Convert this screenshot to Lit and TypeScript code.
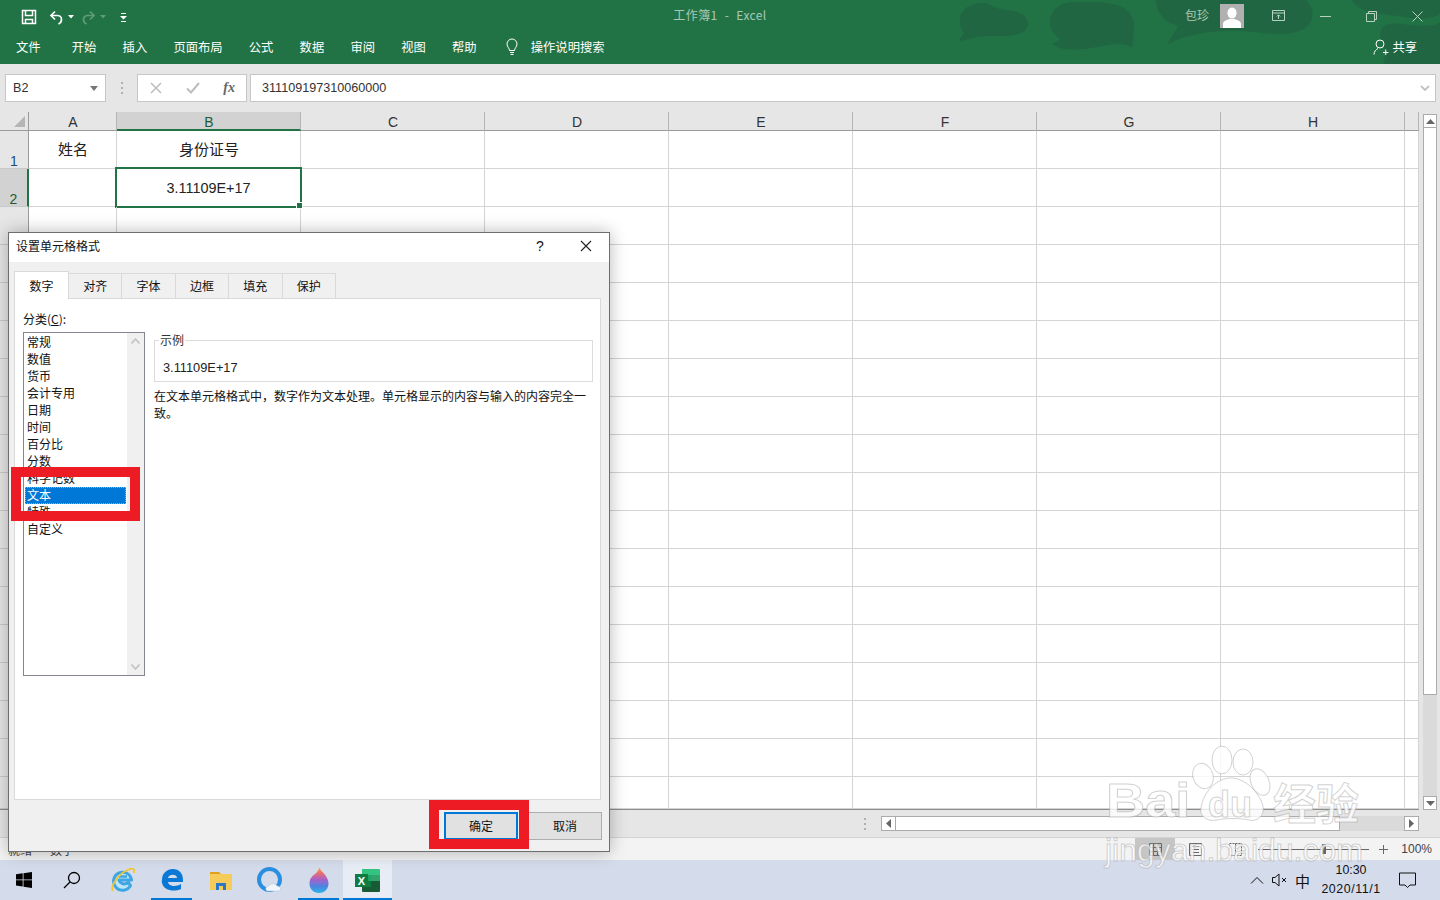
import { LitElement, html, css, nothing } from 'lit';
import { customElement } from 'lit/decorators.js';
import { classMap } from 'lit/directives/class-map.js';

const MENU = ['文件', '开始', '插入', '页面布局', '公式', '数据', '审阅', '视图', '帮助'];
const COLS = ['A', 'B', 'C', 'D', 'E', 'F', 'G', 'H', ''];
const CATEGORIES = ['常规', '数值', '货币', '会计专用', '日期', '时间', '百分比', '分数', '科学记数', '文本', '特殊', '自定义'];
const TABS = ['数字', '对齐', '字体', '边框', '填充', '保护'];
const ROW_COUNT = 18;

@customElement('excel-dialog')
export class ExcelDialog extends LitElement {
  static styles = css`
    :host {
      position: absolute;
      left: 8px;
      top: 232px;
      width: 602px;
      height: 620px;
      box-sizing: border-box;
      display: flex;
      flex-direction: column;
      background: #f0f0f0;
      border: 1px solid #6e6e6e;
      box-shadow: 0 0 16px rgba(0, 0, 0, 0.28);
      font-family: 'Noto Sans CJK SC', 'Liberation Sans', sans-serif;
      font-size: 12px;
      color: #111;
    }
    .title {
      height: 29px;
      box-sizing: border-box;
      padding: 0 0 4px 7px;
      flex: none;
      background: #fff;
      display: flex;
      align-items: center;
    }
    .title .name { flex: 1; }
    .help { width: 20px; text-align: center; font: 14px 'Liberation Sans', sans-serif; margin-right: 30px; }
    .close { width: 12px; height: 12px; margin-right: 17px; }
    .tabs {
      display: flex;
      align-items: flex-end;
      height: 36px;
      padding: 0 0 0 5px;
      flex: none;
    }
    .tab {
      height: 25px;
      box-sizing: border-box;
      width: 53.4px;
      padding-bottom: 1px;
      border: 1px solid #d9d9d9;
      border-left: none;
      border-bottom: none;
      display: flex;
      align-items: center;
      justify-content: center;
    }
    .tab.on {
      width: 55px;
      height: 28px;
      margin-bottom: -1px;
      background: #fff;
      border-left: 1px solid #d9d9d9;
      position: relative;
    }
    .panel {
      margin: 0 8px 0 5px;
      height: 502px;
      flex: none;
      box-sizing: border-box;
      background: #fff;
      border: 1px solid #d9d9d9;
      padding: 12px 7px 0 8px;
    }
    .label { line-height: 15px; margin-bottom: 6px; }
    .cols { display: flex; gap: 9px; }
    .list {
      width: 122px;
      height: 344px;
      box-sizing: border-box;
      border: 1px solid #828790;
      position: relative;
      padding-top: 1px;
      flex: none;
    }
    .item {
      width: 101px;
      height: 17px;
      box-sizing: border-box;
      margin-left: 1px;
      padding-left: 2px;
      line-height: 15px;
    }
    .item.on {
      background: #0078d7;
      color: #fff;
      outline: 1px dotted #e8a04a;
      outline-offset: -1px;
    }
    .bar {
      position: absolute;
      right: 0;
      top: 0;
      bottom: 0;
      width: 17px;
      background: #f0f0f0;
      display: flex;
      flex-direction: column;
      justify-content: space-between;
      align-items: center;
      padding: 5px 0;
      box-sizing: border-box;
    }
    .bar svg { width: 9px; height: 6px; }
    .right { flex: 1; padding-top: 8px; }
    .group {
      position: relative;
      height: 42px;
      box-sizing: border-box;
      border: 1px solid #dcdcdc;
      padding: 18px 0 0 8px;
      line-height: 17px;
      font-family: 'Liberation Sans', sans-serif;
      font-size: 12.8px;
      color: #222;
    }
    .legend {
      position: absolute;
      left: 4px;
      top: -10px;
      padding: 0 1px;
      background: #fff;
      font-family: 'Noto Sans CJK SC', sans-serif;
      font-size: 12px;
      color: #333;
    }
    .desc { margin-top: 5px; line-height: 17px; }
    .foot {
      display: flex;
      justify-content: flex-end;
      gap: 10px;
      padding: 12px 7px 0 0;
    }
    .btn {
      width: 74px;
      height: 28px;
      box-sizing: border-box;
      padding-bottom: 2px;
      background: #e1e1e1;
      border: 1px solid #adadad;
      display: flex;
      align-items: center;
      justify-content: center;
    }
    .btn.def { border: 2px solid #0078d7; }
  `;

  render() {
    return html`
      <div class="title">
        <span class="name">设置单元格格式</span>
        <span class="help">?</span>
        <svg class="close" viewBox="0 0 12 12"><path d="M1 1l10 10M11 1L1 11" stroke="#222" stroke-width="1.1" fill="none"/></svg>
      </div>
      <div class="tabs">
        ${TABS.map((t, i) => html`<div class=${classMap({ tab: true, on: i === 0 })}>${t}</div>`)}
      </div>
      <div class="panel">
        <div class="label">分类(<u>C</u>):</div>
        <div class="cols">
          <div class="list">
            ${CATEGORIES.map((c) => html`<div class=${classMap({ item: true, on: c === '文本' })}>${c}</div>`)}
            <div class="bar">
              <svg viewBox="0 0 9 6"><path d="M0.5 5.5L4.5 1l4 4.5" fill="none" stroke="#c4c4c4" stroke-width="1.6"/></svg>
              <svg viewBox="0 0 9 6"><path d="M0.5 0.5L4.5 5l4-4.5" fill="none" stroke="#c4c4c4" stroke-width="1.6"/></svg>
            </div>
          </div>
          <div class="right">
            <div class="group">
              <span class="legend">示例</span>
              3.11109E+17
            </div>
            <div class="desc">在文本单元格格式中，数字作为文本处理。单元格显示的内容与输入的内容完全一致。</div>
          </div>
        </div>
      </div>
      <div class="foot">
        <div class="btn def">确定</div>
        <div class="btn">取消</div>
      </div>
    `;
  }
}

@customElement('app-root')
export class AppRoot extends LitElement {
  static styles = css`
    :host {
      display: block;
      position: relative;
      width: 1440px;
      height: 900px;
      overflow: hidden;
      background: #e6e6e6;
      font-family: 'Noto Sans CJK SC', 'Liberation Sans', sans-serif;
    }
    .ribbon {
      position: relative;
      height: 64px;
      background: #217346;
      color: #fff;
      font-size: 12.3px;
    }
    .art { position: absolute; left: 0; top: 0; width: 1440px; height: 64px; }
    .titlebar {
      position: relative;
      height: 32px;
      display: grid;
      grid-template-columns: 1fr auto 1fr;
      align-items: center;
    }
    .qat { display: flex; align-items: center; padding-left: 21px; }
    .qat svg { display: block; }
    .doc { color: #a9c9b6; font-size: 12px; letter-spacing: 0.4px; word-spacing: 4px; padding-bottom: 5px; }
    .win { display: flex; align-items: center; justify-content: flex-end; margin-bottom: 2px; }
    .user { color: #a9c9b6; font-size: 12px; margin-right: 11px; padding-bottom: 4px; }
    .avatar { width: 24px; height: 24px; margin-right: 12px; background: #b1b1b1; }
    .wbtn { width: 46px; height: 32px; display: flex; align-items: center; justify-content: center; }
    .menubar {
      position: relative;
      height: 32px;
      box-sizing: border-box;
      padding: 0 23px 2px 16px;
      display: flex;
      align-items: center;
      gap: 26.2px;
    }
    .menubar .first { margin-right: 5px; }
    .tell { display: flex; align-items: center; gap: 11px; margin-left: 1px; }
    .share { margin-left: auto; display: flex; align-items: center; gap: 3px; }

    .formula {
      height: 48px;
      box-sizing: border-box;
      padding: 10px 4px 0 5px;
      display: flex;
      align-items: flex-start;
      background: #e6e6e6;
      font-family: 'Liberation Sans', sans-serif;
      color: #333;
    }
    .box {
      height: 28px;
      box-sizing: border-box;
      background: #fff;
      border: 1px solid #c6c6c6;
      display: flex;
      align-items: center;
    }
    .namebox { width: 101px; padding: 0 7px 0 7px; font-size: 12.6px; justify-content: space-between; }
    .dots { width: 31px; height: 28px; display: flex; align-items: center; justify-content: center; flex: none; }
    .fxbox { width: 110px; margin-right: 3px; justify-content: space-between; padding: 0 11px 0 12px; flex: none; }
    .fx { font: italic 700 14px 'Liberation Serif', serif; color: #666; }
    .input { flex: 1; padding: 0 5px 0 11px; font-size: 12.6px; justify-content: space-between; }

    .sheet { height: 698px; display: flex; background: #fff; }
    .grid {
      width: 1419px;
      height: 698px;
      box-sizing: border-box;
      display: grid;
      grid-template-columns: 29px 88px repeat(7, 184px) 14px;
      grid-template-rows: 19px repeat(17, 38px) 1fr;
      border-bottom: 1px solid #8d8d8d;
      overflow: hidden;
    }
    .cell {
      box-sizing: border-box;
      border-right: 1px solid #d4d4d4;
      border-bottom: 1px solid #d4d4d4;
      display: flex;
      align-items: center;
      justify-content: center;
      font-size: 15px;
      color: #222;
      position: relative;
    }
    .cell.cjk { padding: 0 0 2px 1px; }
    .num { font-family: 'Liberation Sans', sans-serif; font-size: 14.4px; }
    .sel::after {
      content: '';
      position: absolute;
      left: -2px;
      top: -2px;
      right: -2px;
      bottom: -2px;
      border: 2px solid #217346;
    }
    .handle {
      position: absolute;
      right: -3px;
      bottom: -3px;
      width: 5px;
      height: 5px;
      background: #217346;
      border: 1px solid #fff;
      z-index: 1;
    }
    .hd {
      box-sizing: border-box;
      background: #e6e6e6;
      border-right: 1px solid #b4b4b4;
      border-bottom: 1px solid #9b9b9b;
      font: 14px/19px 'Liberation Sans', sans-serif;
      color: #333;
      text-align: center;
      padding: 1px 0 0 1px;
    }
    .hd.on {
      background: #d2d2d2;
      border-bottom: 2px solid #217346;
      color: #1e5a39;
    }
    .corner { position: relative; border-right: 1px solid #9b9b9b; }
    .corner svg { position: absolute; right: 2px; bottom: 2px; }
    .rh {
      box-sizing: border-box;
      background: #e6e6e6;
      border-right: 1px solid #9b9b9b;
      border-bottom: 1px solid #c8c8c8;
      font: 14px/14px 'Liberation Sans', sans-serif;
      color: #1d4e7a;
      text-align: center;
      display: flex;
      align-items: flex-end;
      justify-content: center;
    }
    .rh.on { background: #d2d2d2; border-right: 2px solid #217346; color: #1e5a39; }
    .vbar {
      flex: 1;
      background: #e6e6e6;
      box-sizing: border-box;
      padding: 2px 3px 0 4px;
      display: flex;
      flex-direction: column;
    }
    .arrow {
      flex: none;
      box-sizing: border-box;
      background: #fff;
      border: 1px solid #ababab;
      display: flex;
      align-items: center;
      justify-content: center;
      height: 14px;
    }
    .vthumb { flex: 0 0 567px; background: #fff; border: 1px solid #ababab; border-top: none; box-sizing: border-box; }
    .vtrack { flex: 1; background: #dadada; }

    .tabsrow {
      height: 28px;
      box-sizing: border-box;
      background: #e6e6e6;
      border-bottom: 1px solid #d4d4d4;
      display: flex;
      align-items: center;
      padding: 0 21px 0 862px;
    }
    .grip { width: 6px; margin-right: 13px; display: flex; justify-content: center; }
    .hbar { flex: 1; height: 15px; display: flex; }
    .hbar .arrow { width: 15px; height: 15px; }
    .hthumb { width: 444px; background: #fff; border: 1px solid #ababab; border-left: none; box-sizing: border-box; }
    .htrack { flex: 1; background: #dadada; }

    .status {
      height: 22px;
      background: #f3f3f3;
      display: flex;
      align-items: center;
      font-size: 12px;
      color: #444;
    }
    .st { width: 34px; margin-left: 8px; }
    .views { margin-left: auto; display: flex; height: 22px; }
    .view { width: 40px; display: flex; align-items: center; justify-content: center; }
    .view.on { background: #c6c6c6; }
    .zoom { display: flex; align-items: center; width: 185px; font: 12px 'Liberation Sans', sans-serif; color: #444; }
    .zoom .pct { margin-left: auto; margin-right: 8px; }

    .taskbar { height: 40px; background: #d4dbea; display: flex; align-items: stretch; }
    .start { width: 48px; display: flex; align-items: center; justify-content: center; flex: none; }
    .apps { display: flex; margin-left: 2px; }
    .app { position: relative; width: 49px; display: flex; align-items: center; justify-content: center; }
    .app.open::after {
      content: '';
      position: absolute;
      left: 4px;
      right: 4px;
      bottom: 0;
      height: 2px;
      background: #0078d7;
    }
    .app.active { background: #e8edf5; }
    .app.active::after { left: 0; right: 0; }
    .tray { margin-left: auto; display: flex; align-items: center; padding-right: 14px; color: #111; }
    .ti { width: 23px; display: flex; align-items: center; justify-content: center; font-size: 15px; }
    .clock {
      width: 74px;
      text-align: center;
      font: 12.4px/19px 'Liberation Sans', sans-serif;
    }
    .date { letter-spacing: 0.55px; }
    .notif { width: 38px; display: flex; justify-content: center; }

    .redbox {
      position: absolute;
      box-sizing: border-box;
      border: 10px solid #ed1c24;
    }
    .rb1 { left: 11px; top: 467px; width: 129px; height: 54px; }
    .rb2 { left: 429px; top: 800px; width: 100px; height: 49px; }

    .mark {
      position: absolute;
      left: 1100px;
      top: 740px;
      width: 270px;
      height: 130px;
      pointer-events: none;
      color: rgba(255, 255, 255, 0.8);
      -webkit-text-stroke: 1px rgba(165, 165, 165, 0.5);
      font-family: 'Liberation Sans', sans-serif;
    }
    .mark svg { position: absolute; left: 85px; top: 2px; }
    .bai {
      position: absolute;
      left: 6px;
      top: 37px;
      font-size: 48px;
      line-height: 48px;
      font-weight: 700;
      transform: scaleX(1.13);
      transform-origin: left top;
    }
    .du { position: absolute; left: 108px; top: 47px; font-size: 36px; line-height: 36px; font-weight: 700; }
    .jy { position: absolute; left: 173px; top: 38px; font: 700 43px/46px 'Noto Sans CJK SC', sans-serif; }
    .url { position: absolute; left: 5px; top: 98px; font-size: 32px; line-height: 24px; }
  `;

  private rowCell(row: number, col: string) {
    if (row === 1 && col === 'A') return html`<div class="cell cjk">姓名</div>`;
    if (row === 1 && col === 'B') return html`<div class="cell cjk">身份证号</div>`;
    if (row === 2 && col === 'B') {
      return html`<div class="cell num sel">3.11109E+17<span class="handle"></span></div>`;
    }
    return html`<div class="cell"></div>`;
  }

  private renderGrid() {
    const rows = Array.from({ length: ROW_COUNT }, (_, i) => i + 1);
    return html`
      <div class="grid">
        <div class="hd corner">
          <svg width="13" height="13" viewBox="0 0 13 13"><path d="M12 1v11H1z" fill="#b5b5b5"/></svg>
        </div>
        ${COLS.map((c) => html`<div class=${classMap({ hd: true, on: c === 'B' })}>${c}</div>`)}
        ${rows.map(
          (r) => html`
            <div class=${classMap({ rh: true, on: r === 2 })}>${r < 4 ? r : nothing}</div>
            ${COLS.map((c) => this.rowCell(r, c))}
          `,
        )}
      </div>
    `;
  }

  render() {
    return html`
      <div class="ribbon">
        <svg class="art" viewBox="0 0 1440 64" fill="#206642">
          <path d="M960 22c-2-12 12-20 24-19 8 1 10 6 22 7 14 1 22 6 22 14 0 8-10 12-24 12-16 0-26 0-30 2l-14 3c-2 0 2-6 4-8-2-3-4-7-4-11z"/>
          <path d="M1050 22c0-10 8-20 24-20 26 0 60-2 60 24 0 12-2 20-2 22-6-6-20-4-34-1-14 2-34 6-46-3 4-1 6-3 8-5-6-5-10-10-10-17z"/>
          <path d="M1156 0h150c10 10 10 26-10 32-4 1-10 2-14 2-10 0-22-1-28-2-26-2-60-2-86 12 2-6 8-14 10-18-14-4-22-14-22-26z"/>
          <path d="M1380 36c0-12 10-14 22-12 16 2 38 4 38-4v44h-56c-2-6 4-10 2-14-4-4-6-8-6-14z"/>
          <path d="M1352 0h88v14c-12 8-30 4-42 2-20-2-40-4-46-16z"/>
        </svg>
        <div class="titlebar">
          <div class="qat">
            <svg width="16" height="16" viewBox="0 0 16 16" fill="none" stroke="#fff" stroke-width="1.5">
              <path d="M1.500 1.500h13v13h-13z"/><path d="M4.500 1.500v5h7v-5M4.500 14.500v-4h7v4"/>
            </svg>
            <svg style="margin-left:12px" width="15" height="15" viewBox="0 0 15 15" fill="none" stroke="#fff" stroke-width="1.7">
              <path d="M6 1.500L2 5.500l4 4"/><path d="M2.500 5.500h6a4 4 0 0 1 4 4c0 2-1 3.600-3 4.600"/>
            </svg>
            <svg style="margin-left:4px" width="6" height="4" viewBox="0 0 6 4"><path d="M0 0h6L3 3.500z" fill="#fff"/></svg>
            <svg style="margin-left:7px" width="15" height="15" viewBox="0 0 15 15" fill="none" stroke="#5f9c7a" stroke-width="1.7">
              <path d="M9 1.500l4 4-4 4"/><path d="M12.500 5.500h-6a4 4 0 0 0-4 4c0 2 1 3.600 3 4.600"/>
            </svg>
            <svg style="margin-left:4px" width="6" height="4" viewBox="0 0 6 4"><path d="M0 0h6L3 3.500z" fill="#5f9c7a"/></svg>
            <svg style="margin-left:14px" width="7" height="9" viewBox="0 0 7 9" fill="#fff"><path d="M1 0h5v1H1zM0 3h7L3.500 6.500zM1 8h5v1H1z"/></svg>
          </div>
          <div class="doc">工作簿1 - Excel</div>
          <div class="win">
            <span class="user">包珍</span>
            <svg class="avatar" viewBox="0 0 24 24">
              <ellipse cx="12" cy="9" rx="4.600" ry="5.500" fill="#fff"/>
              <path d="M3 24v-4c0-3 4-4 6.500-5h5c2.500 1 6.500 2 6.500 5v4z" fill="#fff"/>
            </svg>
            <div class="wbtn">
              <svg width="14" height="12" viewBox="0 0 14 12" fill="none" stroke="#b7d2c2"><path d="M.5.500h12v10H.5zM.5 3h12"/><path d="M6.500 9V5M4.800 6.500l1.700-1.700 1.700 1.700"/></svg>
            </div>
            <div class="wbtn"><svg width="11" height="1" viewBox="0 0 11 1"><path d="M0 .5h11" stroke="#b7d2c2"/></svg></div>
            <div class="wbtn">
              <svg width="11" height="11" viewBox="0 0 11 11" fill="none" stroke="#b7d2c2"><path d="M.5 2.500h8v8h-8zM2.500 2.500v-2h8v8h-2"/></svg>
            </div>
            <div class="wbtn">
              <svg width="11" height="11" viewBox="0 0 11 11" fill="none" stroke="#b7d2c2"><path d="M.5.500l10 10M10.500.5l-10 10"/></svg>
            </div>
          </div>
        </div>
        <div class="menubar">
          ${MENU.map((m, i) => html`<span class=${i === 0 ? 'first' : ''}>${m}</span>`)}
          <span class="tell">
            <svg width="16" height="18" viewBox="0 0 16 18" fill="none" stroke="#fff">
              <path d="M5.500 12.500c0-2.500-2.500-3.500-2.500-6.500a5 5 0 0 1 10 0c0 3-2.500 4-2.500 6.500z"/><path d="M6 14.500h4M6.500 16.500h3"/>
            </svg>
            操作说明搜索
          </span>
          <span class="share">
            <svg width="16" height="16" viewBox="0 0 16 16" fill="none" stroke="#fff">
              <circle cx="7" cy="5" r="4"/><path d="M1 15.500c0-3 2-5 4-6M10 13.500h5.500M12.750 10.500v6"/>
            </svg>
            共享
          </span>
        </div>
      </div>

      <div class="formula">
        <div class="box namebox">
          B2
          <svg width="8" height="5" viewBox="0 0 8 5"><path d="M0 0h8L4 5z" fill="#777"/></svg>
        </div>
        <div class="dots">
          <svg width="2" height="12" viewBox="0 0 2 12" fill="#b0b0b0"><path d="M0 0h2v2H0zM0 5h2v2H0zM0 10h2v2H0z"/></svg>
        </div>
        <div class="box fxbox">
          <svg width="12" height="12" viewBox="0 0 12 12" fill="none" stroke="#bdbdbd" stroke-width="1.500"><path d="M1 1l10 10M11 1L1 11"/></svg>
          <svg width="14" height="12" viewBox="0 0 14 12" fill="none" stroke="#bdbdbd" stroke-width="2"><path d="M1 6.500l4 4L13 1"/></svg>
          <span class="fx">fx</span>
        </div>
        <div class="box input">
          311109197310060000
          <svg width="10" height="6" viewBox="0 0 10 6" fill="none" stroke="#c2c2c2" stroke-width="1.800"><path d="M1 1l4 4 4-4"/></svg>
        </div>
      </div>

      <div class="sheet">
        ${this.renderGrid()}
        <div class="vbar">
          <div class="arrow"><svg width="9" height="5" viewBox="0 0 9 5"><path d="M0 5L4.500 0 9 5z" fill="#666"/></svg></div>
          <div class="vthumb"></div>
          <div class="vtrack"></div>
          <div class="arrow"><svg width="9" height="5" viewBox="0 0 9 5"><path d="M0 0l4.500 5L9 0z" fill="#666"/></svg></div>
        </div>
      </div>

      <div class="tabsrow">
        <div class="grip"><svg width="2" height="12" viewBox="0 0 2 12" fill="#b0b0b0"><path d="M0 0h2v2H0zM0 5h2v2H0zM0 10h2v2H0z"/></svg></div>
        <div class="hbar">
          <div class="arrow"><svg width="5" height="9" viewBox="0 0 5 9"><path d="M5 0L0 4.500 5 9z" fill="#666"/></svg></div>
          <div class="hthumb"></div>
          <div class="htrack"></div>
          <div class="arrow"><svg width="5" height="9" viewBox="0 0 5 9"><path d="M0 0l5 4.500L0 9z" fill="#666"/></svg></div>
        </div>
      </div>

      <div class="status">
        <span class="st">就绪</span>
        <span class="st">数字</span>
        <div class="views">
          <div class="view on">
            <svg width="13" height="13" viewBox="0 0 13 13" fill="none" stroke="#666"><path d="M.5.500h12v12H.5zM.5 4.500h12M.5 8.500h12M4.500.5v12M8.500.5v12"/></svg>
          </div>
          <div class="view">
            <svg width="13" height="13" viewBox="0 0 13 13" fill="none" stroke="#666"><path d="M.5.500h12v12H.5zM3 3.500h7M3 6.500h7M3 9.500h7"/></svg>
          </div>
          <div class="view">
            <svg width="13" height="13" viewBox="0 0 13 13" fill="none" stroke="#666"><path d="M.5.500h12v12H.5zM6.500.5v12" stroke-dasharray="2 1"/></svg>
          </div>
        </div>
        <div class="zoom">
          <svg width="134" height="14" viewBox="0 0 134 14" fill="none" stroke="#666">
            <path d="M3 7.500h7M10 7.500h104M124 7.500h9M128.500 3v9"/>
            <path d="M67 2h4v10h-4z" fill="#666" stroke="none"/>
          </svg>
          <span class="pct">100%</span>
        </div>
      </div>

      <div class="taskbar">
        <div class="start">
          <svg width="16" height="16" viewBox="0 0 16 16" fill="#000"><path d="M0 2.300l6.700-1v6.200H0zM7.500 1.200L16 0v7.500H7.500zM0 8.300h6.700v6.300l-6.700-1zM7.500 8.300H16V16l-8.500-1.200z"/></svg>
        </div>
        <div class="start">
          <svg width="18" height="18" viewBox="0 0 18 18" fill="none" stroke="#000" stroke-width="1.300"><circle cx="11" cy="7" r="5.500"/><path d="M7 11l-6 6"/></svg>
        </div>
        <div class="apps">
          <div class="app">
            <svg width="24" height="24" viewBox="0 0 24 24">
              <path d="M19.500 17.500a9 9 0 1 1 1-5.500H8c1 4 6 5 9.500 2.500z" fill="#bfe6f8" stroke="#3ea6e4" stroke-width="3" stroke-linejoin="round"/>
              <path d="M8 8.500h8" stroke="#3ea6e4" stroke-width="2.500"/>
              <path d="M2 23C-1 19 7 5 19 1c3-1 5 0 4 4" fill="none" stroke="#f2c531" stroke-width="1.800"/>
            </svg>
          </div>
          <div class="app open">
            <svg width="22" height="24" viewBox="0 0 22 24">
              <path d="M1 12C1 5 6 1 12 1c6 0 10 4 10 11v2H7c.5 4 7 5.500 13 2v5c-7 3-17 2-19-6-.5-1.500 0-3 0-3zm6-2h9c0-4-8-4.500-9 0z" fill="#0a78d4"/>
            </svg>
          </div>
          <div class="app">
            <svg width="22" height="20" viewBox="0 0 22 20">
              <path d="M0 2h9l2 2h11v16H0z" fill="#f5cb5a"/>
              <path d="M0 2h9l2 2H0z" fill="#e0a020"/>
              <path d="M6 20v-7h10v7h-3v-4H9v4z" fill="#2a78c8"/>
            </svg>
          </div>
          <div class="app">
            <svg width="26" height="26" viewBox="0 0 26 26">
              <circle cx="12.500" cy="12.500" r="10.500" fill="none" stroke="#2a8fe0" stroke-width="4"/>
              <path d="M11 24c-3 0-3-5 1-5 1-3 7-3 8 0 4 0 5 5 1 5z" fill="#f2f5f9" stroke="#b8c6d6" stroke-width=".6"/>
            </svg>
          </div>
          <div class="app open">
            <svg width="20" height="26" viewBox="0 0 20 26">
              <defs>
                <linearGradient id="flame" x1="0" y1="0" x2="0" y2="1">
                  <stop offset="0" stop-color="#f7b733"/>
                  <stop offset=".22" stop-color="#ef6f6a"/>
                  <stop offset=".48" stop-color="#a860c8"/>
                  <stop offset=".75" stop-color="#4a86e0"/>
                  <stop offset="1" stop-color="#2ab4e8"/>
                </linearGradient>
              </defs>
              <path d="M10 0c1 4 9 8 9.500 16 .2 6-4 10-9.500 10S.5 22 .5 16.500C.5 12 3 9 6 7c2-1.500 4-4 4-7z" fill="url(#flame)"/>
            </svg>
          </div>
          <div class="app open active">
            <svg width="25" height="25" viewBox="0 0 25 25">
              <path d="M7 1h17a1 1 0 0 1 1 1v5H7z" fill="#33c481"/>
              <path d="M7 7h9v6H7z" fill="#21a366"/>
              <path d="M16 7h9v6h-9z" fill="#33a36c"/>
              <path d="M7 13h9v6H7z" fill="#107c41"/>
              <path d="M16 13h9v6h-9z" fill="#185c37"/>
              <path d="M7 19h18v4a1 1 0 0 1-1 1H8a1 1 0 0 1-1-1z" fill="#185c37"/>
              <rect x="0" y="6" width="13" height="13" fill="#107c41"/>
              <text x="6.500" y="16.500" text-anchor="middle" font-family="Liberation Sans" font-weight="700" font-size="11" fill="#fff">X</text>
            </svg>
          </div>
        </div>
        <div class="tray">
          <div class="ti"><svg width="14" height="8" viewBox="0 0 14 8" fill="none" stroke="#111"><path d="M1 7.500l6-6 6 6"/></svg></div>
          <div class="ti">
            <svg width="16" height="14" viewBox="0 0 16 14" fill="none" stroke="#111"><path d="M.5 4.500h2.500L7 1v12L3 9.500H.5zM10 5l4 4M14 5l-4 4"/></svg>
          </div>
          <div class="ti">中</div>
          <div class="clock">10:30<br /><span class="date">2020/11/1</span></div>
          <div class="notif">
            <svg width="17" height="17" viewBox="0 0 17 17" fill="none" stroke="#111"><path d="M.5 1h16v12h-5.500L8.500 15.500 6 13H.5z"/></svg>
          </div>
        </div>
      </div>

      <excel-dialog></excel-dialog>
      <div class="redbox rb1"></div>
      <div class="redbox rb2"></div>

      <div class="mark">
        <svg width="90" height="90" viewBox="0 0 90 90" fill="rgba(255,255,255,.8)" stroke="rgba(165,165,165,.5)">
          <ellipse cx="18" cy="34" rx="10" ry="13" transform="rotate(-18 18 34)"/>
          <ellipse cx="37" cy="18" rx="10" ry="14"/>
          <ellipse cx="58" cy="20" rx="10" ry="13"/>
          <ellipse cx="75" cy="40" rx="9" ry="14" transform="rotate(-24 75 40)"/>
          <path d="M16 66c2-16 16-30 30-30s28 14 32 28c2 10-6 16-14 14-8-2-24-2-32 0-10 2-18-4-16-12z"/>
        </svg>
        <span class="bai">Bai</span>
        <span class="du">du</span>
        <span class="jy">经验</span>
        <span class="url">jingyan.baidu.com</span>
      </div>
    `;
  }
}

declare global {
  interface HTMLElementTagNameMap {
    'app-root': AppRoot;
    'excel-dialog': ExcelDialog;
  }
}
